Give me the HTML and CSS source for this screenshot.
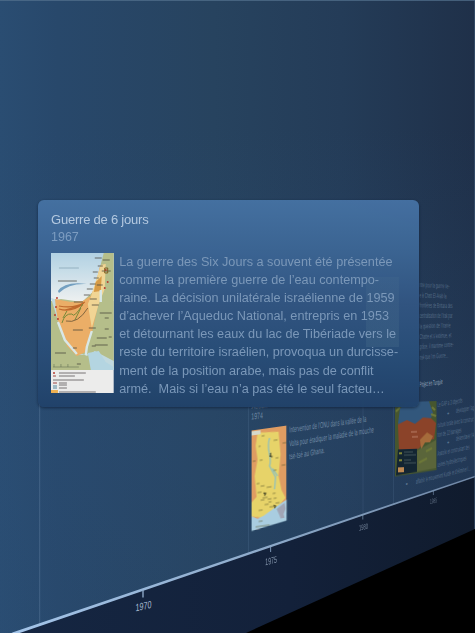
FILE: index.html
```html
<!DOCTYPE html>
<html lang="fr">
<head>
<meta charset="utf-8">
<title>Chronologie</title>
<link rel="stylesheet" href="styles.css">
</head>
<body>
<main class="timeline">
  <svg class="scene" viewBox="0 0 475 633" width="475" height="633">
    <defs>
      <linearGradient id="wall" x1="0" x2="1" y1="0" y2="0">
        <stop offset="0" stop-color="#2a4d72"/><stop offset=".12" stop-color="#28486b"/><stop offset=".45" stop-color="#27435f"/><stop offset=".72" stop-color="#243c58"/><stop offset="1" stop-color="#1f3049"/>
      </linearGradient>
      <linearGradient id="glow" x1="0" x2="0" y1="0" y2="1">
        <stop offset=".2" stop-color="#2b4f78" stop-opacity="0"/><stop offset=".7" stop-color="#2b4f78" stop-opacity=".28"/><stop offset="1" stop-color="#2b4f78" stop-opacity=".12"/>
      </linearGradient>
      <linearGradient id="floor" x1="0" x2="1" y1="0" y2="0">
        <stop offset="0" stop-color="#152642"/><stop offset=".6" stop-color="#13213a"/><stop offset="1" stop-color="#101b2d"/>
      </linearGradient>
      <linearGradient id="rail" gradientUnits="userSpaceOnUse" x1="0" x2="475" y1="0" y2="0">
        <stop offset="0" stop-color="#a4c5ea"/><stop offset=".5" stop-color="#91aece"/><stop offset="1" stop-color="#6f87a6"/>
      </linearGradient>
    </defs>
    <rect width="475" height="633" fill="url(#wall)"/>
    <rect width="475" height="633" fill="url(#glow)"/>
    <path d="M0 .5H475" stroke="#54728f" stroke-opacity=".7"/>
    <path d="M13 633L240 556.5 475 476V633Z" fill="url(#floor)"/>
    <path d="M246 633L475 529V633Z" fill="#000"/>
    <g stroke="#7897b8" stroke-opacity=".32">
      <path d="M39.7 400V624"/><path d="M248.5 400V553" stroke-opacity=".16"/><path d="M363 400V514" stroke-opacity=".14"/><path d="M393.5 400V504" stroke-opacity=".14"/>
    </g>
    <path d="M11.5 632.8L240 555.2 475 475.7V477.2L240 557.7 18 633.6Z" fill="url(#rail)"/>
    <g stroke="#8ba6c5" fill="none"><path d="M143 590V597.5" stroke-width="1.4"/><path d="M270.6 546V552" stroke-width="1.1" stroke-opacity=".8"/><path d="M362.8 515V519.5" stroke-opacity=".6"/><path d="M433.4 491V495" stroke-opacity=".5"/></g>
    <g class="year">
      <text transform="translate(135.4 611.5) skewY(-13)" font-size="10.5" textLength="16" lengthAdjust="spacingAndGlyphs">1970</text>
      <text transform="translate(265.3 565.3) skewY(-13)" font-size="9.5" textLength="11.5" lengthAdjust="spacingAndGlyphs" opacity=".75">1975</text>
      <text transform="translate(359 530.8) skewY(-13)" font-size="8" textLength="9" lengthAdjust="spacingAndGlyphs" opacity=".62">1980</text>
      <text transform="translate(430 504) skewY(-13)" font-size="7" textLength="7" lengthAdjust="spacingAndGlyphs" opacity=".5">1985</text>
    </g>

    <!-- 1974 : Volta -->
    <g class="far">
      <text transform="translate(251.5 409) skewY(-5)" font-size="8" textLength="16" lengthAdjust="spacingAndGlyphs">Action</text>
      <text transform="translate(251.3 419.5) skewY(-5)" font-size="9" textLength="11.5" lengthAdjust="spacingAndGlyphs">1974</text>
      <text transform="translate(289.3 432.6) skewY(-8)" font-size="8.5" textLength="77" lengthAdjust="spacingAndGlyphs">Intervention de l’ONU dans la vallée de la</text>
      <text transform="translate(289.3 446.5) skewY(-9.5)" font-size="8.5" textLength="84.5" lengthAdjust="spacingAndGlyphs">Volta pour éradiquer la maladie de la mouche</text>
      <text transform="translate(289.3 459.5) skewY(-10.5)" font-size="8.5" textLength="35.5" lengthAdjust="spacingAndGlyphs">tsé-tsé au Ghana.</text>
    </g>
    <g class="map" transform="translate(251.6 430.5) skewY(-8)">
      <path d="M0 0H35V87Q17 94.5 0 103.5Z" fill="#df9c62" clip-path="inset(0 0 4px 0)"/>
      <path d="M6 3L27 5 29 28 27 49 30 64 34 72 28 78 20 83 12 89 0 86V72L5 67 3 46 6 30 4 16Z" fill="#e7d369"/>
      <path d="M0 86L6 89 12 87 24 80 35 74V95L0 100.5Z" fill="#a9cde0"/>
      <path d="M25 82L33 77 34 83 32 88 33 92 29 92 28 89Z" fill="#a0a5b5"/>
      <path d="M18 10C14 22 21 28 18 38L24 50 23 62M21 41L26 49" fill="none" stroke="#8fc0bd" stroke-width="1.3"/>
      <path d="M0 1H9V5H0" fill="#d5d9cc"/>
      <g stroke="#59552a" stroke-width=".8" opacity=".7"><path d="M10 7h3M22 13h4M7 17h2M31 17h4M8 31h3M24 31h3M1 31h3M30 39h4M22 43h3M5 54h3M9 57h4M15 59h5M6 63h4M12 65h3M9 71h4M16 71h4M13 76h4M18 79h5M22 71h3M17 74h3M24 76h4M7 81h4M21 66h3M11 69h5M7 92h4M4 97h14"/></g>
      <path d="M19 25v3h-1l2 1h1M12 64l2 1-1 2M22 78l2 1-1 2" stroke="#33351e" stroke-width="1" fill="none"/>
    </g>

    <!-- 1980 : guerre -->
    <g class="far dim">
      <text transform="translate(419.5 287) skewY(3)" textLength="30" lengthAdjust="spacingAndGlyphs">ntre pour la guerre se-</text>
      <text transform="translate(419.5 297.5) skewY(2)" textLength="27" lengthAdjust="spacingAndGlyphs">e à Chatt El-Arab la</text>
      <text transform="translate(419.5 307.5) skewY(1)" textLength="33" lengthAdjust="spacingAndGlyphs">frontières de Bottara des</text>
      <text transform="translate(419.5 318) skewY(0)" textLength="33" lengthAdjust="spacingAndGlyphs">centralisation de l’Irak par</text>
      <text transform="translate(419.5 328.5) skewY(-2)" textLength="31" lengthAdjust="spacingAndGlyphs">la question de l’Iranie</text>
      <text transform="translate(419.5 339) skewY(-3)" textLength="32" lengthAdjust="spacingAndGlyphs">Chatte et s’exténue, et</text>
      <text transform="translate(419.5 349) skewY(-4)" textLength="34" lengthAdjust="spacingAndGlyphs">grâce, il maritime contre-</text>
      <text transform="translate(419.5 359.5) skewY(-4)" textLength="29" lengthAdjust="spacingAndGlyphs">osé que l’on Guerre…</text>
    </g>

    <!-- 1983 : Turquie -->
    <text class="project" transform="translate(419.5 387) skewY(-7)" textLength="23" lengthAdjust="spacingAndGlyphs">Project en Turquie</text>
    <g class="map" transform="translate(395 402.5) skewY(-2)">
      <path d="M0 0H41.5V69L0 74Z" fill="#46562f"/>
      <path d="M5 6L12 0H34L38 12 33 24 25 27 18 25 8 28 3 21Z" fill="#32577c"/>
      <path d="M3 22L12 18 20 22 28 16 36 17 41 22 39 38 29 39 24 47 4 48Z" fill="#8b4329"/>
      <path d="M25 38L32 31 38 35 35 41 30 41 26 48Z" fill="#a56b3b"/>
      <path d="M22 49L41 39V67L22 70Z" fill="#5a653a"/>
      <path d="M3 47H22V70L1 73Z" fill="#132532"/>
      <path d="M4 51h3M4 58h3" stroke="#a5a538" stroke-width="1.6"/><path d="M9 50h9M9 53h12M9 58h7M9 61h12" stroke="#637274" stroke-width=".6"/>
      <path d="M3 65h6v5H3Z" fill="#bd8851"/><path d="M16 30h6M17 35h6" stroke="#b9806b"/>
      <path d="M1 9l4-4M37 6l3 3M36 13l5 2M24 61l8-4M31 50l6-3" stroke="#6d7838" stroke-width="2"/>
    </g>
    <g class="far dim">
      <text transform="translate(437.5 407) skewY(-10)" textLength="25" lengthAdjust="spacingAndGlyphs">Le GAP a 3 objectifs</text>
      <text transform="translate(447 416) skewY(-10)">•</text><text transform="translate(456 413) skewY(-10)" textLength="18" lengthAdjust="spacingAndGlyphs">développer l’ag</text>
      <text transform="translate(437.5 427.5) skewY(-10)" textLength="36" lengthAdjust="spacingAndGlyphs">culture locale avec la construc</text>
      <text transform="translate(437.5 437) skewY(-11)" textLength="24" lengthAdjust="spacingAndGlyphs">tion de 22 barrages</text>
      <text transform="translate(447 445) skewY(-10)">•</text><text transform="translate(456 441) skewY(-12)" textLength="18" lengthAdjust="spacingAndGlyphs">désenclaver l’A</text>
      <text transform="translate(437.5 456) skewY(-12)" textLength="32" lengthAdjust="spacingAndGlyphs">Anatolie en construisant des</text>
      <text transform="translate(437.5 467) skewY(-13)" textLength="29" lengthAdjust="spacingAndGlyphs">usines hydroélectriques</text>
      <text transform="translate(405.5 486.5) skewY(-10)">•</text>
      <text transform="translate(416 484) skewY(-14)" textLength="55" lengthAdjust="spacingAndGlyphs">affaiblir le mouvement Kurde et d’éliminer l…</text>
    </g>
    <path d="M474.5 0V529" stroke="#45617f" stroke-opacity=".5"/>
  </svg>

  <article class="card">
    <h1>Guerre de 6 jours</h1>
    <p class="date">1967</p>
    <div class="content">
      <svg class="thumb" viewBox="0 0 63 140" preserveAspectRatio="none">
        <defs><linearGradient id="sea" x1="0" x2="0" y1="0" y2="1"><stop offset="0" stop-color="#b4d4e6"/><stop offset="1" stop-color="#f1f4f3"/></linearGradient></defs>
        <rect width="63" height="140" fill="#f0f0ee"/><rect width="63" height="48" fill="url(#sea)"/>
        <g class="map">
        <path d="M0 48L10 46 31 49 43 38 53 0H63V117H0Z" fill="#b8c18b"/>
        <path d="M0 45L7 47 8 70 18 91 27 102 39 101 44 117H63V108L44 98 36 103 25 98 13 87 7 68Z" fill="#c5dce2"/>
        <path d="M4 46L20 49 32 48 40 43 45 31 49 14 54 11 53 30 48 49 41 80 35 99 26 103 16 93 7 68 5 56Z" fill="#efb167"/>
        <path d="M40 44L46 25 50 12 55 11 54 36 48 51 41 75 37 51Z" fill="#f5d895"/>
        <path d="M45 29L51 23 50 38 43 39Z" fill="#db9d47"/>
        <path d="M37 100L48 98 55 109 63 114V117H40Z" fill="#b7d8e4"/>
        <path d="M41 78L36 94 35 102M7 69L14 87 26 101M50 37v12" stroke="#dcebea" stroke-width="2.4" fill="none"/>
        <path d="M7 38Q14 28 36 31Q18 30 8 40Z" fill="#75a1c2"/>
        <g fill="none" stroke="#c36a2b" stroke-width="1.1"><path d="M34 49Q24 56 8 53M33 50Q21 60 8 56M32 52l-18 5"/></g>
        <g fill="none" stroke="#788b39"><path d="M32 51Q23 66 21 61Q14 60 11 70M30 55L24 67M16 58l-4 7"/><path d="M37 55Q27 71 15 68" stroke="#83653e"/></g>
        <g stroke="#464338" stroke-width="1" opacity=".75"><path d="M44 5h7M52 7h7M47 13h5M42 19h5M51 18h9M43 25h5M39 31h6M46 32h6M36 36h6M33 42h6M23 49h9M39 46h7M41 52h7M7 28h19M49 60h12M22 77h10M38 75h7M54 76h4M46 85h10M44 92h13M4 100h11M22 95h4M41 93h4M54 65h4M26 111h4M58 84h3"/></g>
        <path d="M8 15h20" stroke="#7797aa" stroke-width="1" opacity=".6"/>
        <g fill="#ba3b2e"><circle cx="6" cy="45" r="1"/><circle cx="5" cy="54" r="1"/><circle cx="4" cy="62" r="1"/><circle cx="7" cy="66" r="1"/><circle cx="55" cy="17" r="1"/><circle cx="57" cy="29" r="1"/><circle cx="54" cy="35" r="1"/></g>
        <path d="M54 15h3v5h-3z" fill="none" stroke="#825e20"/><path d="M2 114h26M3 111v3M10 111v3M17 111v3" stroke="#687458" stroke-width=".6"/>
        <circle cx="3" cy="120" r="1" fill="#ba3b2e"/>
        <path d="M8 120h27M8 123h16M2 127h31M8 130h8M8 132h8M8 135h8M8 139h37" stroke="#5b5657" stroke-width=".8"/><path d="M2 123h3M2 130h4" stroke="#a34540"/><path d="M2 133h4M2 135h4" stroke="#548aa0"/><path d="M0 137h7v3H0z" fill="#f2b452"/>
        </g>
      </svg>
      <p class="summary">La guerre des Six Jours a souvent été présentée<br>comme la première guerre de l’eau contempo-<br>raine. La décision unilatérale israélienne de 1959<br>d’achever l’Aqueduc National, entrepris en 1953<br>et détournant les eaux du lac de Tibériade vers le<br>reste du territoire israélien, provoqua un durcisse-<br>ment de la position arabe, mais pas de conflit<br>armé.&nbsp; Mais si l’eau n’a pas été le seul facteu…</p>
    </div>
  </article>
</main>
</body>
</html>
```

FILE: styles.css
```css
body {
  margin: 0;
  background: #000;
  font-family: "Liberation Sans", Arial, sans-serif;
}

.timeline {
  position: relative;
  width: 475px;
  height: 633px;
  overflow: hidden;
}

.scene {
  display: block;
}

.map {
  filter: blur(.35px);
}

.year {
  fill: #a7b9cf;
}

.far {
  fill: #8ba3bd;
  fill-opacity: .75;
}

.dim {
  font-size: 7px;
  fill-opacity: .52;
}

.project {
  font-size: 7.5px;
  fill: #b5c5d8;
  fill-opacity: .85;
}

/* The selected event floats over the receding timeline. */
.card {
  position: absolute;
  left: 37.5px;
  top: 200px;
  box-sizing: border-box;
  width: 381px;
  height: 206.5px;
  padding: 11px 13.5px;
  border-radius: 6px;
  background:
    linear-gradient(rgba(120, 160, 170, .06), rgba(120, 160, 170, .13)) 328px 77px / 33px 70px no-repeat,
    linear-gradient(#4571a2, #3c6594 24%, #325581 50%, #294e78 74%, #21426a);
  box-shadow: 0 1px 3px rgba(10, 25, 48, .65);
  opacity: .98;
}

.card h1,
.card p {
  margin: 0;
  font-weight: 400;
}

.card h1 {
  font-size: 13px;
  line-height: 18px;
  letter-spacing: -.22px;
  color: #b7cce3;
}

.card .date {
  font-size: 12.5px;
  line-height: 16px;
  color: #7f9fc3;
}

.content {
  display: flex;
  gap: 5.5px;
  margin-top: 8px;
}

.thumb {
  flex: none;
  width: 62.7px;
  height: 140px;
}

.card .summary {
  font-size: 12.68px;
  line-height: 18.1px;
  white-space: nowrap;
  color: #7d9abb;
}
```
